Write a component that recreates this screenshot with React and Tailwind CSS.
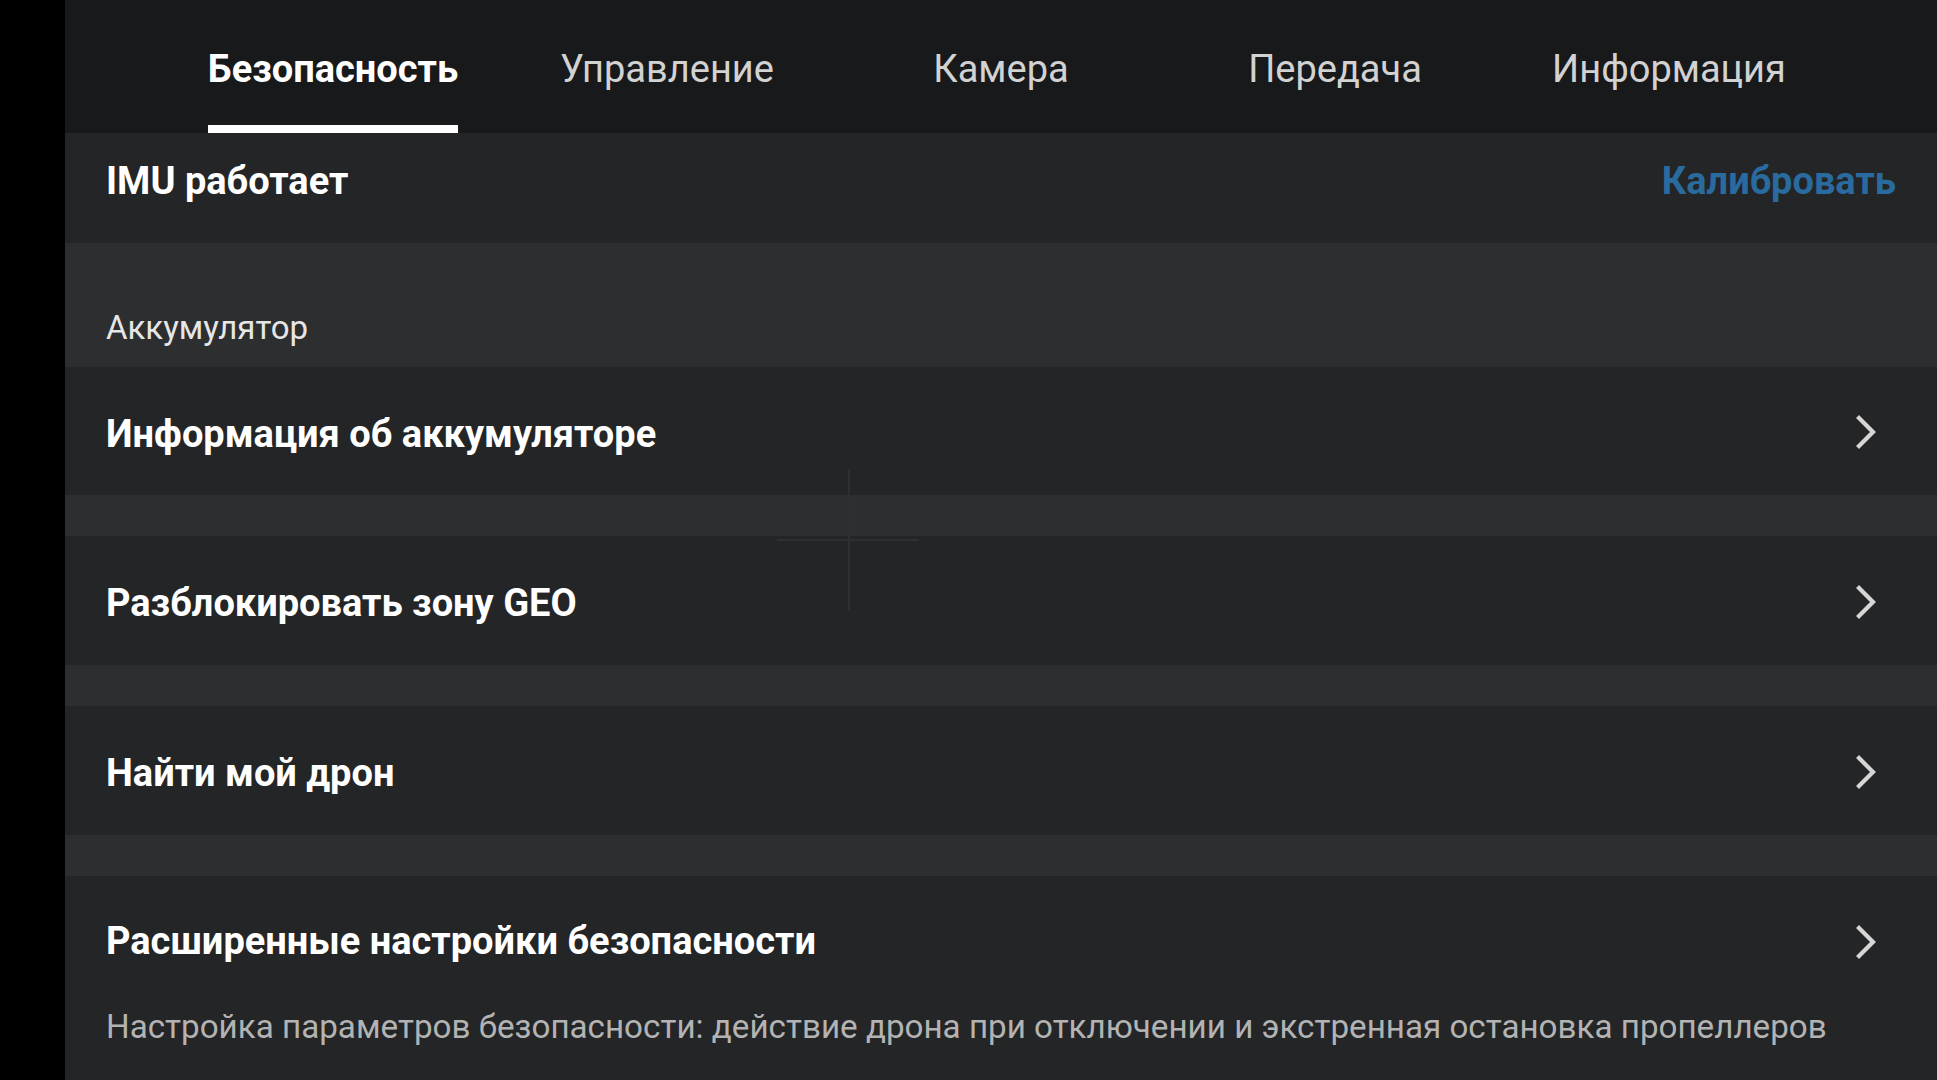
const TABS = ['Безопасность', 'Управление', 'Камера', 'Передача', 'Информация'];

const FONT = { fontFamily: 'Roboto, "Noto Sans", sans-serif' };

function Chevron() {
    return (
        <svg width="24" height="34" viewBox="0 0 24 34" className="shrink-0 mt-[2px]">
            <path d="M5 3 L19 17 L5 31" fill="none" stroke="#d6d6d6" strokeWidth="4.2" strokeLinecap="square" strokeLinejoin="miter" />
        </svg>
    );
}

function LinkRow({ title, h = 'h-[129px]' }) {
    return (
        <div className={`bg-[#242526] ${h} pl-[41px] pr-[59px] flex items-center justify-between shrink-0`}>
            <span className="text-white font-bold text-[38px] leading-[44px] mt-[5px]">{title}</span>
            <Chevron />
        </div>
    );
}

function Gap() {
    return <div className="bg-[#2d2e30] h-[41px] shrink-0" />;
}

export default function App() {
    return (
        <div className="w-[1937px] h-[1080px] flex bg-black overflow-hidden" style={FONT}>
            <div className="w-[65px] bg-black shrink-0" />
            <div className="flex-1 flex flex-col bg-[#242526] relative">
                {/* tab bar */}
                <div className="h-[133px] bg-[#18191b] px-[101px] grid grid-cols-5 shrink-0">
                    {TABS.map((t, i) => (
                        <div key={t} className="flex justify-center h-full">
                            <div className="flex flex-col h-full">
                                <span className={`pt-[47px] text-[38px] leading-[44px] ${i === 0 ? 'text-white font-bold' : 'text-[#d2d2d2]'}`}>{t}</span>
                                {i === 0 && <div className="mt-auto h-[8px] bg-white" />}
                            </div>
                        </div>
                    ))}
                </div>

                {/* IMU */}
                <div className="h-[110px] pt-[26px] pl-[41px] pr-[41px] flex justify-between items-start shrink-0">
                    <span className="text-white font-bold text-[38px] leading-[44px]">IMU работает</span>
                    <span className="text-[#2a6b9f] font-bold text-[38px] leading-[44px]">Калибровать</span>
                </div>

                {/* section header */}
                <div className="h-[124px] bg-[#2d2e30] pt-[66px] pl-[41px] shrink-0">
                    <span className="text-[#e6e6e6] text-[33px] leading-[38px]">Аккумулятор</span>
                </div>

                <LinkRow title="Информация об аккумуляторе" h="h-[128px]" />
                <Gap />
                <LinkRow title="Разблокировать зону GEO" />
                <Gap />
                <LinkRow title="Найти мой дрон" />
                <Gap />

                <div className="flex-1 bg-[#242526] pl-[41px] pr-[59px] pt-[43px]">
                    <div className="flex items-center justify-between">
                        <span className="text-white font-bold text-[38px] leading-[44px]">Расширенные настройки безопасности</span>
                        <Chevron />
                    </div>
                    <div className="mt-[45px] text-[#b3b3b3] text-[33.2px] leading-[38px] whitespace-nowrap">
                        Настройка параметров безопасности: действие дрона при отключении и экстренная остановка пропеллеров
                    </div>
                </div>

                {/* faint crosshair overlay */}
                <div className="absolute left-[783px] top-[469px] w-[2px] h-[142px] bg-[#2e2f31]" />
                <div className="absolute left-[712px] top-[539px] w-[142px] h-[2px] bg-[#2e2f31]" />
            </div>
        </div>
    );
}
